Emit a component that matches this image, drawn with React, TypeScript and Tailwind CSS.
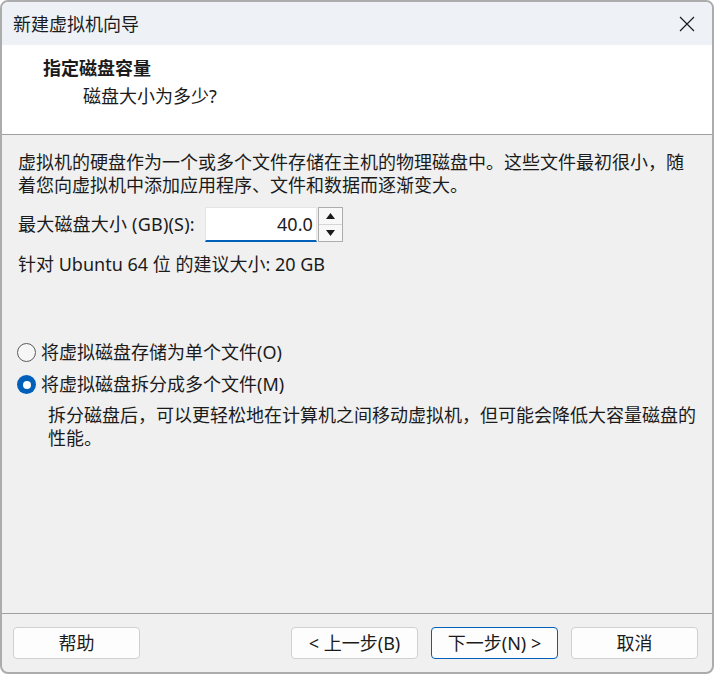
const font = { fontFamily: '"Noto Sans", "Noto Sans CJK SC", sans-serif' };

const Radio = ({ checked }: { checked?: boolean }) =>
  checked ? (
    <span className="w-[19px] h-[19px] rounded-full bg-[#005fb8] flex items-center justify-center">
      <span className="w-[8px] h-[8px] rounded-full bg-white" />
    </span>
  ) : (
    <span className="w-[19px] h-[19px] rounded-full border-[1.5px] border-[#5b5b5b] bg-[#f6f6f6]" />
  );

const Button = ({ children, primary }: { children: React.ReactNode; primary?: boolean }) => (
  <button
    className={
      primary
        ? "w-[127px] h-[32px] rounded-[4px] bg-[#fdfdfd] border border-[#005fb8] text-[18px] text-[#1b1b1b] flex items-center justify-center"
        : "w-[127px] h-[32px] rounded-[4px] bg-[#fdfdfd] border border-[#d0d0d0] text-[18px] text-[#1b1b1b] flex items-center justify-center"
    }
  >
    {children}
  </button>
);

export default function App() {
  return (
    <div
      style={font}
      className="w-[714px] h-[674px] flex flex-col bg-[#f0f0f0] border-2 border-[#acacac] rounded-[8px] overflow-hidden text-[#1b1b1b] text-[18px]"
    >
      {/* title bar */}
      <div className="h-[43px] bg-[#eef2f7] flex items-center justify-between pl-[11px] pr-[17px]">
        <span className="leading-[24px] pt-[1px]">新建虚拟机向导</span>
        <svg width="16" height="16" viewBox="0 0 16 16" className="mt-[1px]">
          <path d="M1 1 L15 15 M15 1 L1 15" stroke="#1b1b1b" strokeWidth="1.2" fill="none" />
        </svg>
      </div>

      {/* header */}
      <div className="h-[90px] bg-white border-b border-[#a0a0a0] pl-[41px] pt-[11px]">
        <div className="font-bold leading-[24px]">指定磁盘容量</div>
        <div className="leading-[24px] mt-[4px] pl-[40px]">磁盘大小为多少?</div>
      </div>

      {/* body */}
      <div className="flex-1 flex flex-col pl-[16px]">
        <div className="mt-[16px] leading-[23px]">
          <div className="whitespace-nowrap">虚拟机的硬盘作为一个或多个文件存储在主机的物理磁盘中。这些文件最初很小，随</div>
          <div className="whitespace-nowrap">着您向虚拟机中添加应用程序、文件和数据而逐渐变大。</div>
        </div>

        <div className="mt-[10px] flex items-center h-[35px]">
          <span className="leading-[23px] whitespace-nowrap tracking-[0.2px]">最大磁盘大小 (GB)(S):</span>
          <div className="ml-[10px] w-[112px] h-[35px] bg-white border border-[#e5e5e5] border-b-2 border-b-[#005fb8] flex items-center justify-end pr-[3px]">
            <span className="leading-[23px]">40.0</span>
          </div>
          <div className="ml-[1px] w-[25px] h-[35px] border border-[#adadad] bg-[#f8f8f8] flex flex-col">
            <div className="flex-1 flex items-center justify-center border-b border-[#d6d6d6]">
              <svg width="9" height="6" viewBox="0 0 9 6">
                <path d="M4.5 0 L9 6 L0 6 Z" fill="#1b1b1b" />
              </svg>
            </div>
            <div className="flex-1 flex items-center justify-center">
              <svg width="9" height="6" viewBox="0 0 9 6">
                <path d="M0 0 L9 0 L4.5 6 Z" fill="#1b1b1b" />
              </svg>
            </div>
          </div>
        </div>

        <div className="mt-[11px] leading-[23px] whitespace-nowrap">针对 Ubuntu 64 位 的建议大小: 20 GB</div>

        <div className="mt-[65px] flex items-center gap-[5px] leading-[23px] -ml-[1px]">
          <Radio />
          <span>将虚拟磁盘存储为单个文件(O)</span>
        </div>
        <div className="mt-[9px] flex items-center gap-[5px] leading-[23px] -ml-[1px]">
          <Radio checked />
          <span>将虚拟磁盘拆分成多个文件(M)</span>
        </div>
        <div className="mt-[8px] ml-[30px] leading-[23px]">
          <div className="whitespace-nowrap">拆分磁盘后，可以更轻松地在计算机之间移动虚拟机，但可能会降低大容量磁盘的</div>
          <div>性能。</div>
        </div>
      </div>

      {/* footer */}
      <div className="border-t border-[#a0a0a0] pt-[13px] pb-[13px] pl-[11px] pr-[14px] flex items-center">
        <Button>帮助</Button>
        <div className="flex-1" />
        <div className="flex gap-[13px]">
          <Button>&lt; 上一步(B)</Button>
          <Button primary>下一步(N) &gt;</Button>
          <Button>取消</Button>
        </div>
      </div>
    </div>
  );
}
